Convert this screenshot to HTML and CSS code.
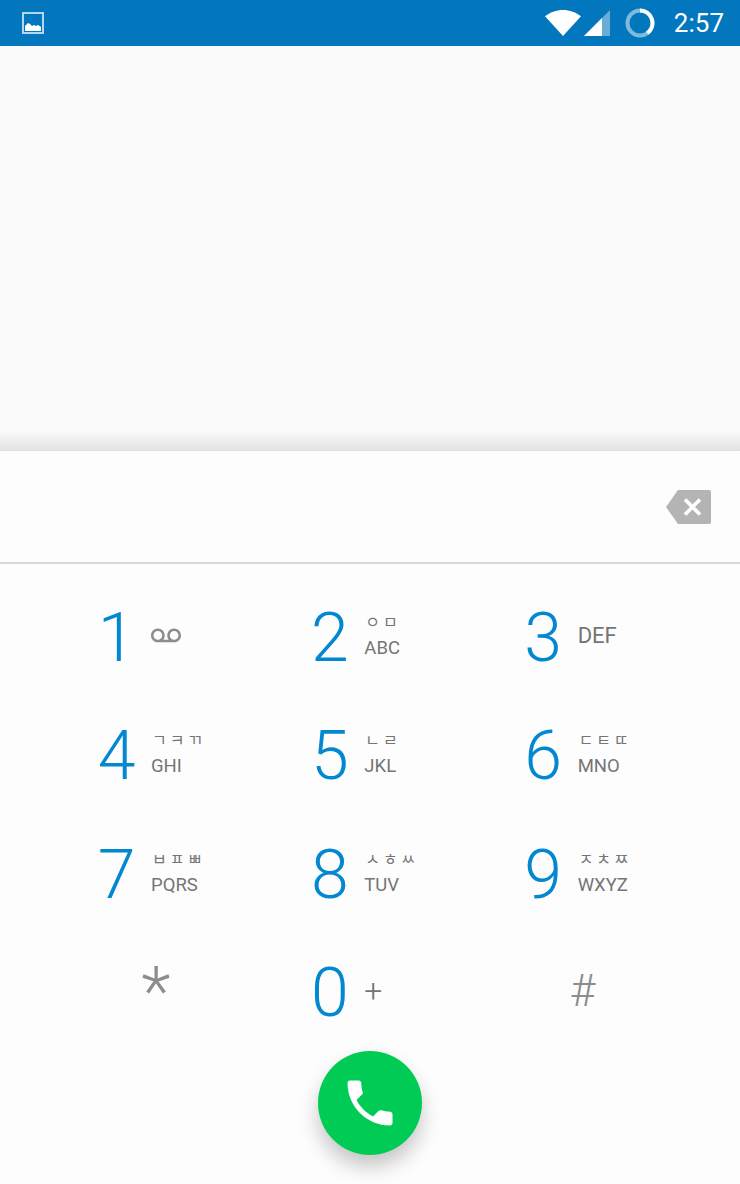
FILE: index.html
```html
<!DOCTYPE html>
<html lang="ko">
<head>
  <title>Dialer</title>
  <meta charset="UTF-8" />
  <meta name="viewport" content="width=device-width, initial-scale=1.0"/>
  <link rel="stylesheet" href="styles.css">
</head>
<body>
  <header class="status-bar">
    <svg class="notif-icon" width="24" height="24" viewBox="0 0 24 24">
      <rect x="1" y="1" width="20" height="20" fill="none" stroke="#b3d6ea" stroke-width="2"/>
      <path d="M3 19v-5l3-3 2 1 2 2 2-1 2 1 2-1 3 2v4z" fill="#fff"/>
    </svg>
    <div class="status-right">
      <svg class="wifi" width="36" height="26" viewBox="0 0 37 27" preserveAspectRatio="none">
        <path d="M0 6.500C5 2.500 11.500 0 18.500 0S32 2.500 37 6.500L18.500 27z" fill="#fff"/>
      </svg>
      <svg class="signal" width="27" height="27" viewBox="0 0 27 27">
        <path d="M0 26L26 0v26z" fill="#fff" fill-opacity=".4"/>
        <path d="M0 26L18 8v18z" fill="#fff"/>
      </svg>
      <svg class="ring" width="30" height="30" viewBox="0 0 30 30">
        <circle cx="15" cy="15" r="12.500" fill="none" stroke="#7fb9dc" stroke-width="4"/>
        <path d="M15 2.500A12.500 12.500 0 0 1 22.300 25.100" fill="none" stroke="#fff" stroke-width="4"/>
      </svg>
      <span class="clock">2:57</span>
    </div>
  </header>

  <section class="recents"></section>

  <main class="dialpad">
    <div class="digits-field">
      <svg class="backspace" width="46" height="34" viewBox="0 0 46 34">
        <path d="M12 0h31a2 2 0 0 1 2 2v30a2 2 0 0 1-2 2H12L0 17z" fill="#b4b4b4"/>
        <path d="M19 9.500l15 15M34 9.500l-15 15" stroke="#fff" stroke-width="3.600"/>
      </svg>
    </div>

    <div class="keys">
      <div class="key">
        <span class="digit">1</span>
        <div class="letters">
          <svg class="voicemail" width="30" height="30" viewBox="0 0 24 24">
            <path d="M18.500 6C15.460 6 13 8.460 13 11.500c0 1.330.47 2.550 1.260 3.500H9.740c.79-.95 1.260-2.170 1.260-3.500C11 8.460 8.540 6 5.500 6S0 8.460 0 11.500 2.460 17 5.500 17h13c3.040 0 5.500-2.460 5.500-5.500S21.540 6 18.500 6zm-13 9C3.570 15 2 13.430 2 11.500S3.570 8 5.500 8 9 9.570 9 11.500 7.430 15 5.500 15zm13 0c-1.930 0-3.500-1.570-3.500-3.500S16.570 8 18.500 8 22 9.570 22 11.500 20.430 15 18.500 15z"/>
          </svg>
        </div>
      </div>
      <div class="key">
        <span class="digit">2</span>
        <div class="letters"><span class="hangul">ㅇ ㅁ</span><span class="latin">ABC</span></div>
      </div>
      <div class="key">
        <span class="digit">3</span>
        <div class="letters"><span class="latin solo">DEF</span></div>
      </div>

      <div class="key">
        <span class="digit">4</span>
        <div class="letters"><span class="hangul">ㄱ ㅋ ㄲ</span><span class="latin">GHI</span></div>
      </div>
      <div class="key">
        <span class="digit">5</span>
        <div class="letters"><span class="hangul">ㄴ ㄹ</span><span class="latin">JKL</span></div>
      </div>
      <div class="key">
        <span class="digit">6</span>
        <div class="letters"><span class="hangul">ㄷ ㅌ ㄸ</span><span class="latin">MNO</span></div>
      </div>

      <div class="key">
        <span class="digit">7</span>
        <div class="letters"><span class="hangul">ㅂ ㅍ ㅃ</span><span class="latin">PQRS</span></div>
      </div>
      <div class="key">
        <span class="digit">8</span>
        <div class="letters"><span class="hangul">ㅅ ㅎ ㅆ</span><span class="latin">TUV</span></div>
      </div>
      <div class="key">
        <span class="digit">9</span>
        <div class="letters"><span class="hangul">ㅈ ㅊ ㅉ</span><span class="latin">WXYZ</span></div>
      </div>

      <div class="key">
        <span class="symbol star">*</span>
      </div>
      <div class="key">
        <span class="digit">0</span>
        <div class="letters"><span class="plus">+</span></div>
      </div>
      <div class="key">
        <span class="symbol hash">#</span>
      </div>
    </div>

    <div class="call-row">
      <button class="call-btn" aria-label="Call">
        <svg width="60" height="60" viewBox="0 0 24 24">
          <path d="M6.620 10.790c1.440 2.830 3.760 5.140 6.590 6.590l2.200-2.200c.27-.27.67-.36 1.020-.24 1.120.37 2.330.57 3.570.57.55 0 1 .45 1 1V20c0 .55-.45 1-1 1-9.390 0-17-7.610-17-17 0-.55.45-1 1-1h3.500c.55 0 1 .45 1 1 0 1.250.2 2.450.57 3.570.11.35.03.74-.25 1.020l-2.200 2.200z" fill="#fff"/>
        </svg>
      </button>
    </div>
  </main>
</body>
</html>
```

FILE: styles.css
```css
html, body {
  height: 100%;
}
body {
  margin: 0;
  width: 740px;
  height: 1184px;
  overflow: hidden;
  display: flex;
  flex-direction: column;
  font-family: Roboto, "Noto Sans CJK KR", sans-serif;
  background-color: #fafafa;
}

.status-bar {
  height: 46px;
  flex: none;
  display: flex;
  align-items: center;
  justify-content: space-between;
  padding: 0 16px 0 22px;
  background-color: #0277bd;
}
.notif-icon {
  margin-top: 2px;
}
.status-right {
  display: flex;
  align-items: center;
}
.wifi {
  margin-right: 3px;
}
.signal {
  margin-right: 14px;
}
.ring {
  margin-right: 19px;
}
.clock {
  color: #fff;
  font-size: 26px;
  line-height: 46px;
}

.recents {
  height: 405px;
  flex: none;
  background: linear-gradient(to bottom, #fafafa 0, #fafafa 385px, #e3e3e3 404px, #dcdcdc 405px);
}

.dialpad {
  flex: 1;
  display: flex;
  flex-direction: column;
  background-color: #fdfdfd;
}
.digits-field {
  height: 113px;
  flex: none;
  display: flex;
  align-items: center;
  justify-content: flex-end;
  padding-right: 28px;
  border-bottom: 2px solid #d8d8d8;
  box-sizing: border-box;
}

.keys {
  display: grid;
  grid-template-columns: repeat(3, 1fr);
  grid-auto-rows: 118.250px;
  padding: 13px 50px 0;
}
.key {
  display: flex;
  align-items: center;
  padding-left: 47px;
}
.digit {
  width: 39px;
  margin-top: 4px;
  margin-right: 15px;
  font-size: 68px;
  font-weight: 300;
  line-height: 1;
  color: #0288d1;
  text-align: center;
}
.letters {
  display: flex;
  flex-direction: column;
  color: #757575;
}
.latin {
  font-size: 18.500px;
  line-height: 24px;
}
.latin.solo {
  font-size: 22px;
}
.hangul {
  font-size: 16px;
  line-height: 22px;
  margin-bottom: 2px;
  margin-left: 1px;
  word-spacing: -1px;
  white-space: nowrap;
}
.voicemail {
  display: block;
  fill: #8c8c8c;
}
.plus {
  font-size: 32px;
  font-weight: 300;
  line-height: 1;
}
.symbol {
  width: 118px;
  font-weight: 300;
  color: #8c8c8c;
  text-align: center;
  line-height: 1;
}
.star {
  margin-top: 2px;
  font-size: 68px;
}
.hash {
  font-size: 44px;
}

.call-row {
  display: flex;
  justify-content: center;
  margin-top: 1px;
}
.call-btn {
  width: 104px;
  height: 104px;
  padding: 0;
  border: 0;
  border-radius: 50%;
  display: flex;
  align-items: center;
  justify-content: center;
  background-color: #00cc55;
  box-shadow: 0 12px 20px rgba(0,0,0,0.22);
}
```
